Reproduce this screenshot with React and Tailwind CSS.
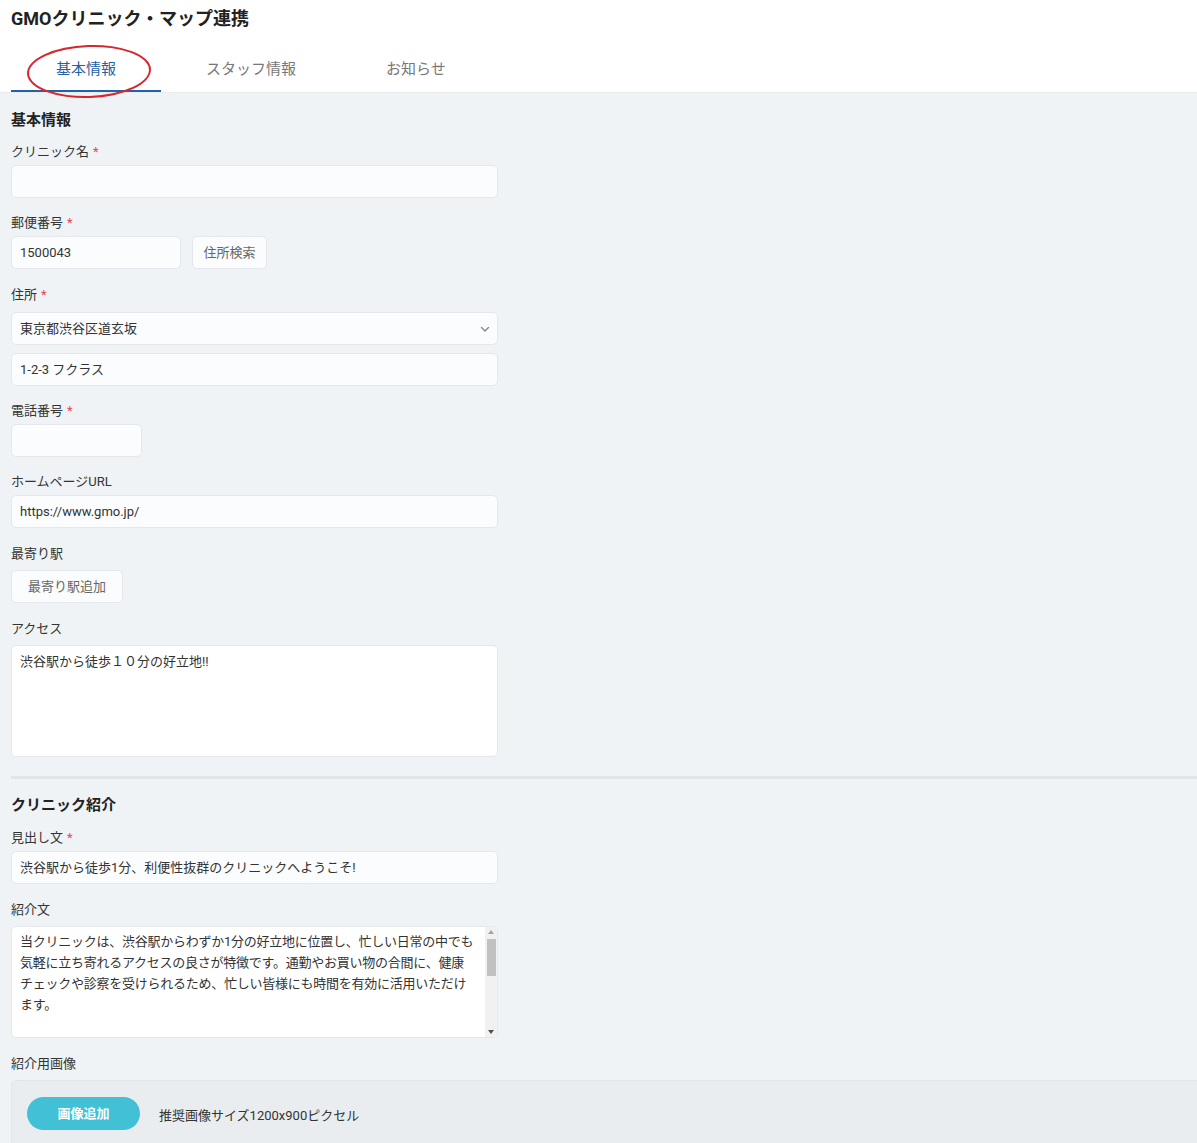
import React from "react";

const font = { fontFamily: '"Roboto", "Noto Sans CJK JP", sans-serif' };

function Label({ children, required }) {
  return (
    <div className="text-[13px] leading-5 text-[#333]">
      {children}
      {required && <span className="ml-1 text-[#e5484d]">*</span>}
    </div>
  );
}

function Field({ children, className = "" }) {
  return (
    <div
      className={`h-[33px] flex items-center px-2 rounded-[5px] border border-[#e4e8ec] bg-[#fafcfd] text-[13px] text-[#333] ${className}`}
    >
      {children}
    </div>
  );
}

function GhostButton({ children, className = "" }) {
  return (
    <div
      className={`h-[33px] flex items-center justify-center rounded-[5px] border border-[#e4e8ec] bg-[#fafcfd] text-[13px] text-[#666] ${className}`}
    >
      {children}
    </div>
  );
}

export default function App() {
  return (
    <div className="min-h-screen bg-[#eff3f6]" style={font}>
      {/* header */}
      <div className="bg-white px-[11px]">
        <h1 className="pt-[7px] text-[18px] font-bold leading-6 text-[#222]">
          GMOクリニック・マップ連携
        </h1>
        <div className="mt-[24px] flex">
          <div className="relative px-[45px] pb-[9px] pt-[2px] border-b-2 border-[#2462a8] text-[15px] leading-6 text-[#2462a8]">
            基本情報
            <div className="absolute left-[16px] top-[-10px] w-[124px] h-[53px] rounded-[50%] border-2 border-[#d7262d] -rotate-2"></div>
          </div>
          <div className="px-[45px] pb-[9px] pt-[2px] text-[15px] leading-6 text-[#777]">
            スタッフ情報
          </div>
          <div className="px-[45px] pb-[9px] pt-[2px] text-[15px] leading-6 text-[#777]">
            お知らせ
          </div>
        </div>
      </div>
      <div className="h-px bg-[#e9ebed]"></div>

      {/* body */}
      <div className="pl-[11px]">
        <div className="w-[487px]">
          <h2 className="pt-[15px] text-[15px] font-bold leading-6 text-[#222]">基本情報</h2>

          <div className="mt-[10px]">
            <Label required>クリニック名</Label>
            <Field className="mt-[3px]"></Field>
          </div>

          <div className="mt-[15px]">
            <Label required>郵便番号</Label>
            <div className="mt-[3px] flex gap-[11px]">
              <Field className="w-[170px]">1500043</Field>
              <GhostButton className="w-[75px]">住所検索</GhostButton>
            </div>
          </div>

          <div className="mt-[16px]">
            <Label required>住所</Label>
            <Field className="mt-[7px] justify-between">
              <span>東京都渋谷区道玄坂</span>
              <svg width="12" height="12" viewBox="0 0 12 12" fill="none" className="mr-[-2px]">
                <path d="M2.5 4.5 6 8l3.5-3.5" stroke="#888" strokeWidth="1.4" strokeLinecap="round" strokeLinejoin="round" />
              </svg>
            </Field>
            <Field className="mt-[8px]">1-2-3 フクラス</Field>
          </div>

          <div className="mt-[15px]">
            <Label required>電話番号</Label>
            <Field className="mt-[3px] w-[131px]"></Field>
          </div>

          <div className="mt-[15px]">
            <Label>ホームページURL</Label>
            <Field className="mt-[3px]">https://www.gmo.jp/</Field>
          </div>

          <div className="mt-[16px]">
            <Label>最寄り駅</Label>
            <GhostButton className="mt-[6px] w-[112px]">最寄り駅追加</GhostButton>
          </div>

          <div className="mt-[16px]">
            <Label>アクセス</Label>
            <div className="mt-[6px] h-[112px] rounded-[5px] border border-[#e4e8ec] bg-white px-2 py-[6px] text-[13px] leading-5 text-[#333]">
              渋谷駅から徒歩１０分の好立地!!
            </div>
          </div>
        </div>

        <div className="mt-[19px] h-[3px] bg-[#dfe5ea]"></div>

        <div className="w-[487px]">
          <h2 className="pt-[14px] text-[15px] font-bold leading-6 text-[#222]">クリニック紹介</h2>

          <div className="mt-[11px]">
            <Label required>見出し文</Label>
            <Field className="mt-[3px]">渋谷駅から徒歩1分、利便性抜群のクリニックへようこそ!</Field>
          </div>

          <div className="mt-[16px]">
            <Label>紹介文</Label>
            <div className="mt-[6px] h-[112px] flex rounded-[5px] border border-[#e4e8ec] bg-white text-[13px] leading-[21px] text-[#333]">
              <div className="flex-1 px-2 pt-[4px] whitespace-nowrap tracking-[-0.25px]">
                当クリニックは、渋谷駅からわずか1分の好立地に位置し、忙しい日常の中でも
                <br />
                気軽に立ち寄れるアクセスの良さが特徴です。通勤やお買い物の合間に、健康
                <br />
                チェックや診察を受けられるため、忙しい皆様にも時間を有効に活用いただけ
                <br />
                ます。
              </div>
              <div className="w-[12px] bg-[#f1f1f1] flex flex-col items-center py-[3px]">
                <div className="w-0 h-0 border-l-[3px] border-r-[3px] border-b-[4px] border-l-transparent border-r-transparent border-b-[#a3a3a3]"></div>
                <div className="mt-[5px] w-[9px] h-[37px] bg-[#c1c1c1]"></div>
                <div className="flex-1"></div>
                <div className="w-0 h-0 border-l-[3px] border-r-[3px] border-t-[4px] border-l-transparent border-r-transparent border-t-[#505050]"></div>
              </div>
            </div>
          </div>

          <div className="mt-[16px]">
            <Label>紹介用画像</Label>
          </div>
        </div>

        <div className="mt-[6px] h-[70px] rounded-tl-[6px] border-t border-l border-[#e1e6ea] bg-[#e9edf0] flex items-center pl-[15px] pb-[4px]">
          <div className="w-[113px] h-[33px] rounded-full bg-[#41c0d6] flex items-center justify-center text-[13px] font-bold text-white">
            画像追加
          </div>
          <div className="ml-[19px] pt-[4px] text-[13px] text-[#333]">推奨画像サイズ1200x900ピクセル</div>
        </div>
      </div>
    </div>
  );
}
